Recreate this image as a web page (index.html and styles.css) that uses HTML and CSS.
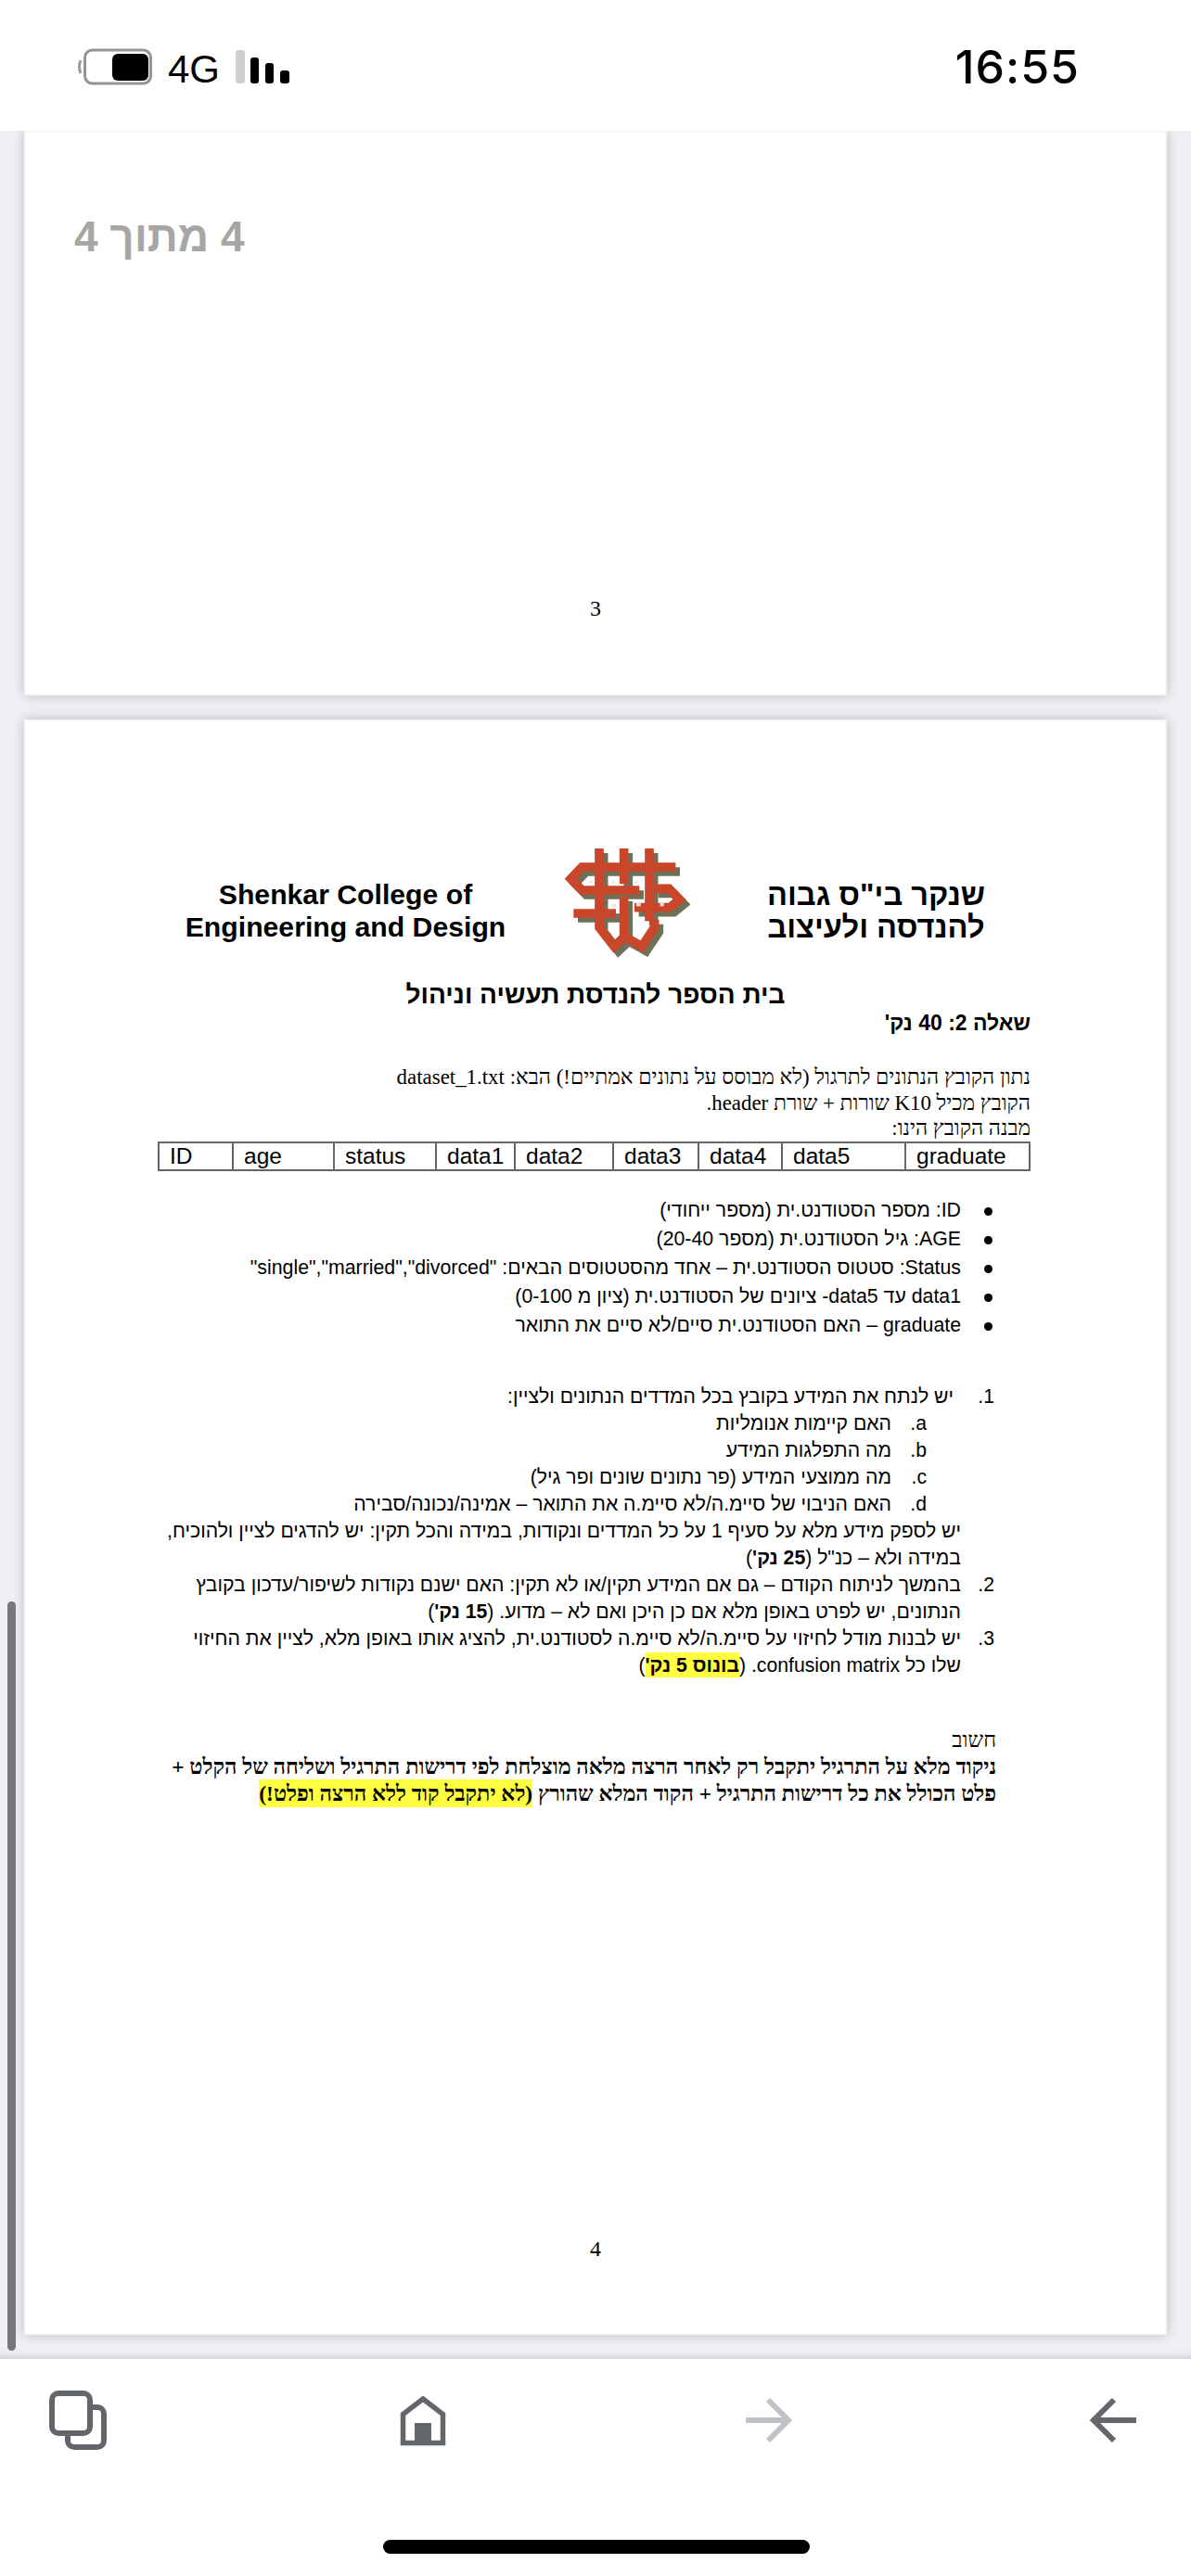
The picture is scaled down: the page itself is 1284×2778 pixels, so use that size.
FILE: index.html
```html
<!DOCTYPE html>
<html lang="he">
<head>
<meta charset="utf-8">
<title>PDF</title>
<link rel="stylesheet" href="styles.css">
</head>
<body>
<header class="status">
  <div class="status-left">
    <svg class="battery" viewBox="0 0 81 40" aria-hidden="true">
      <path d="M4 13 Q1 20 4 27" fill="none" stroke="#9a9a9a" stroke-width="3"/>
      <rect x="8.5" y="2" width="71" height="36" rx="8" fill="#fff" stroke="#949494" stroke-width="3"/>
      <rect x="38" y="6" width="39" height="29" rx="6" fill="#000"/>
    </svg>
    <span class="network">4G</span>
    <svg class="signal" viewBox="0 0 58 36" aria-hidden="true">
      <rect x="0" y="0" width="10" height="36" rx="3" fill="#cfcfcf"/>
      <rect x="16" y="8" width="9" height="28" rx="3" fill="#000"/>
      <rect x="32" y="14" width="9" height="22" rx="3" fill="#000"/>
      <rect x="48" y="22" width="10" height="14" rx="3" fill="#000"/>
    </svg>
  </div>
  <div class="clock">16:55</div>
</header>

<main class="viewer">
  <div class="page-badge" dir="rtl">4 מתוך 4</div>
  <div class="scrollbar"></div>

  <section class="page page-first">
    <div class="page-number">3</div>
  </section>

  <section class="page page-second" dir="rtl">
    <div class="letterhead" dir="ltr">
      <div class="org">Shenkar College of<br>Engineering and Design</div>
      <svg class="logo" viewBox="0 0 540 450" aria-hidden="true">
        <defs>
          <g id="knot" fill="none" stroke-width="29">
            <path d="M168 45V300L216 362L250 330L306 362L347 300V275"/>
            <path d="M330 45V280"/>
            <path d="M248 45V160M248 200V330"/>
            <path d="M415 105H112L76 143L112 180H298"/>
            <path d="M85 255H222M282 236H396L428 210L394 175H345"/>
          </g>
        </defs>
        <use href="#knot" x="14" y="15" stroke="#6f7058"/>
        <use href="#knot" stroke="#c9462a"/>
        <g fill="#f1e6df">
          <rect x="134" y="150" width="14" height="8"/>
          <rect x="208" y="150" width="12" height="8"/>
          <rect x="283" y="150" width="12" height="8"/>
          <rect x="208" y="224" width="14" height="10"/>
          <rect x="288" y="222" width="14" height="10"/>
          <rect x="365" y="222" width="12" height="10"/>
        </g>
      </svg>
      <div class="org org-he">שנקר בי"ס גבוה<br>להנדסה ולעיצוב</div>
    </div>

    <h1 class="school">בית הספר להנדסת תעשיה וניהול</h1>
    <h2 class="question">שאלה 2: 40 נק'</h2>

    <div class="intro">
      <p>נתון הקובץ הנתונים לתרגול (לא מבוסס על נתונים אמתיים!) הבא: dataset_1.txt</p>
      <p>הקובץ מכיל K10 שורות + שורת header.</p>
      <p>מבנה הקובץ הינו:</p>
    </div>

    <table class="schema" dir="ltr">
      <tr>
        <td class="c-id">ID</td><td class="c-age">age</td><td class="c-status">status</td>
        <td class="c-d1">data1</td><td class="c-d2">data2</td><td class="c-d3">data3</td>
        <td class="c-d4">data4</td><td class="c-d5">data5</td><td class="c-grad">graduate</td>
      </tr>
    </table>

    <ul class="fields">
      <li>ID: מספר הסטודנט.ית (מספר ייחודי)</li>
      <li>AGE: גיל הסטודנט.ית (מספר 20-40)</li>
      <li>Status: סטטוס הסטודנט.ית – אחד מהסטטוסים הבאים: "single","married","divorced"</li>
      <li>data1 עד data5- ציונים של הסטודנט.ית (ציון מ 0-100)</li>
      <li>graduate – האם הסטודנט.ית סיים/לא סיים את התואר</li>
    </ul>

    <div class="tasks">
      <div class="task task-lead"><span class="num">1.</span><span>יש לנתח את המידע בקובץ בכל המדדים הנתונים ולציין:</span></div>
      <div class="sub"><span class="letter">a.</span><span>האם קיימות אנומליות</span></div>
      <div class="sub"><span class="letter">b.</span><span>מה התפלגות המידע</span></div>
      <div class="sub"><span class="letter">c.</span><span>מה ממוצעי המידע (פר נתונים שונים ופר גיל)</span></div>
      <div class="sub"><span class="letter">d.</span><span>האם הניבוי של סיימ.ה/לא סיימ.ה את התואר – אמינה/נכונה/סבירה</span></div>
      <div class="task"><span class="num"></span><span>יש לספק מידע מלא על סעיף 1 על כל המדדים ונקודות, במידה והכל תקין: יש להדגים לציין ולהוכיח,</span></div>
      <div class="task"><span class="num"></span><span>במידה ולא – כנ"ל (<b>25 נק'</b>)</span></div>
      <div class="task"><span class="num">2.</span><span>בהמשך לניתוח הקודם – גם אם המידע תקין/או לא תקין: האם ישנם נקודות לשיפור/עדכון בקובץ</span></div>
      <div class="task"><span class="num"></span><span>הנתונים, יש לפרט באופן מלא אם כן היכן ואם לא – מדוע. (<b>15 נק'</b>)</span></div>
      <div class="task"><span class="num">3.</span><span>יש לבנות מודל לחיזוי על סיימ.ה/לא סיימ.ה לסטודנט.ית, להציג אותו באופן מלא, לציין את החיזוי</span></div>
      <div class="task"><span class="num"></span><span>שלו כל confusion matrix. (<b class="mark">בונוס 5 נק'</b>)</span></div>
    </div>

    <div class="notice">
      <p>חשוב</p>
      <p class="strong">ניקוד מלא על התרגיל יתקבל רק לאחר הרצה מלאה מוצלחת לפי דרישות התרגיל ושליחה של הקלט +</p>
      <p class="strong">פלט הכולל את כל דרישות התרגיל + הקוד המלא שהורץ <span class="mark">(לא יתקבל קוד ללא הרצה ופלט!)</span></p>
    </div>

    <div class="page-number page-number-last">4</div>
  </section>
</main>

<footer class="toolbar">
  <div class="icons">
    <svg class="icon" viewBox="0 0 62 64" aria-hidden="true">
      <rect x="3" y="3" width="41" height="43" rx="7" fill="none" stroke="#63666a" stroke-width="6"/>
      <path d="M47 18h5a7 7 0 0 1 7 7v29a7 7 0 0 1-7 7H27a7 7 0 0 1-7-7v-8" fill="none" stroke="#63666a" stroke-width="6"/>
    </svg>
    <svg class="icon" viewBox="0 0 62 64" aria-hidden="true">
      <path d="M31 9L52.500 25.500V56.500H9.500V25.500Z" fill="none" stroke="#63666a" stroke-width="5.500"/>
      <rect x="22" y="35" width="18" height="24" fill="#63666a"/>
    </svg>
    <svg class="icon" viewBox="0 0 62 64" aria-hidden="true">
      <path d="M6 32H51M30 10L52 32L30 54" fill="none" stroke="#bfc2c6" stroke-width="6"/>
    </svg>
    <svg class="icon" viewBox="0 0 62 64" aria-hidden="true">
      <path d="M55 32H10M31 10L9 32L31 54" fill="none" stroke="#63666a" stroke-width="6"/>
    </svg>
  </div>
  <div class="home-bar"></div>
</footer>
</body>
</html>
```
FILE: styles.css
```css
* { box-sizing: border-box; }
html, body { margin: 0; padding: 0; }
body {
  width: 1284px;
  height: 2778px;
  overflow: hidden;
  background: #fff;
  font-family: "Liberation Sans", sans-serif;
  color: #000;
  display: flex;
  flex-direction: column;
}
p, h1, h2, ul { margin: 0; padding: 0; font-weight: normal; }

.status {
  height: 141px;
  flex: none;
  background: #fff;
  display: flex;
  justify-content: space-between;
  padding: 52px 120px 0 83px;
  position: relative;
  z-index: 2;
}
.status-left { display: flex; align-items: flex-start; }
.battery { width: 81px; height: 40px; display: block; }
.network {
  font-family: "Liberation Sans", sans-serif;
  font-size: 42px;
  line-height: 40px;
  margin: 3px 0 0 17px;
  width: 56px;
  white-space: nowrap;
}
.signal { width: 58px; height: 36px; margin: 2px 0 0 17px; display: block; }
.clock {
  font-family: Inter, sans-serif;
  font-weight: 500;
  font-size: 50px;
  line-height: 40px;
  letter-spacing: 1px;
}

.viewer {
  height: 2403px;
  flex: none;
  background: #efeff4;
  padding: 0 26px;
  position: relative;
  box-shadow: inset 0 -10px 10px -8px rgba(0, 0, 0, 0.16);
}
.page-badge {
  position: absolute;
  left: 80px;
  top: 86px;
  font-weight: bold;
  font-size: 46px;
  line-height: 56px;
  color: #a6a6a6;
  z-index: 1;
}
.scrollbar {
  position: absolute;
  left: 8px;
  top: 1586px;
  width: 9px;
  height: 808px;
  border-radius: 5px;
  background: #77777b;
  z-index: 1;
}
.page {
  background: #fff;
  border: 2px solid #f6f6f6;
  box-shadow: 0 0 12px rgba(0, 0, 0, 0.22);
}
.page-first {
  height: 609px;
  padding-top: 498px;
}
.page-second {
  height: 1742px;
  margin-top: 26px;
  padding: 122px 145px 0 145px;
  font-size: 24px;
}
.page-number {
  font-family: "Liberation Serif", serif;
  font-size: 24px;
  line-height: 30px;
  text-align: center;
}
.page-number-last { margin-top: 461.5px; }

.letterhead {
  display: grid;
  grid-template-columns: 399px 206px 333px;
  height: 150px;
  align-items: center;
}
.org {
  font-weight: bold;
  font-size: 30.2px;
  line-height: 35px;
  text-align: center;
  padding-top: 14px;
}
.org-he { font-size: 32.6px; }
.logo {
  width: 180px;
  height: 150px;
  display: block;
  justify-self: center;
  margin-left: 10px;
  filter: blur(0.6px);
}

.school {
  margin-top: 8px;
  font-size: 28px;
  line-height: 30px;
  font-weight: bold;
  text-align: center;
}
.question {
  font-size: 23px;
  line-height: 30px;
  font-weight: bold;
}

.intro {
  margin-top: 30px;
  font-family: "Liberation Serif", serif;
  font-size: 22.9px;
  line-height: 27.5px;
}
.intro p { white-space: nowrap; }

.schema {
  border-collapse: collapse;
  width: 939px;
  height: 30px;
  table-layout: fixed;
  font-size: 24.500px;
}
.schema td {
  border: 2px solid #666;
  padding: 0 11px;
  height: 30px;
  line-height: 28px;
}
.c-id { width: 80px; }
.c-age { width: 109px; }
.c-status { width: 110px; }
.c-d1 { width: 85px; }
.c-d2 { width: 106px; }
.c-d3 { width: 92px; }
.c-d4 { width: 90px; }
.c-d5 { width: 133px; }
.c-grad { width: 134px; }

.fields {
  margin-top: 27px;
  padding-right: 75px;
  list-style: none;
  font-size: 21.300px;
  line-height: 31px;
}
.fields li { position: relative; white-space: nowrap; }
.fields li::before {
  content: "";
  position: absolute;
  right: -34px;
  top: 12px;
  width: 9px;
  height: 9px;
  border-radius: 50%;
  background: #000;
}

.tasks {
  margin-top: 46px;
  font-size: 21.200px;
  line-height: 29px;
}
.task, .sub { display: flex; white-space: nowrap; }
.task { padding-right: 39px; }
.num { width: 36px; flex: none; }
.task-lead .num { width: 44px; }
.sub { padding-right: 112px; }
.letter { width: 38px; flex: none; }
b { font-weight: bold; }
.mark { background: #ffff40; padding: 2px 0; }

.notice {
  margin-top: 52px;
  font-family: "Liberation Serif", serif;
  font-size: 23.4px;
  line-height: 29px;
  padding-right: 37px;
  white-space: nowrap;
}
.strong { font-weight: bold; }

.toolbar {
  height: 234px;
  flex: none;
  background: #fff;
  padding: 34px 52px 0 53px;
  position: relative;
}
.icons { display: flex; justify-content: space-between; }
.icon { width: 62px; height: 64px; display: block; }
.home-bar {
  width: 460px;
  height: 15px;
  margin: 97px auto 0;
  border-radius: 8px;
  background: #000;
}
```
